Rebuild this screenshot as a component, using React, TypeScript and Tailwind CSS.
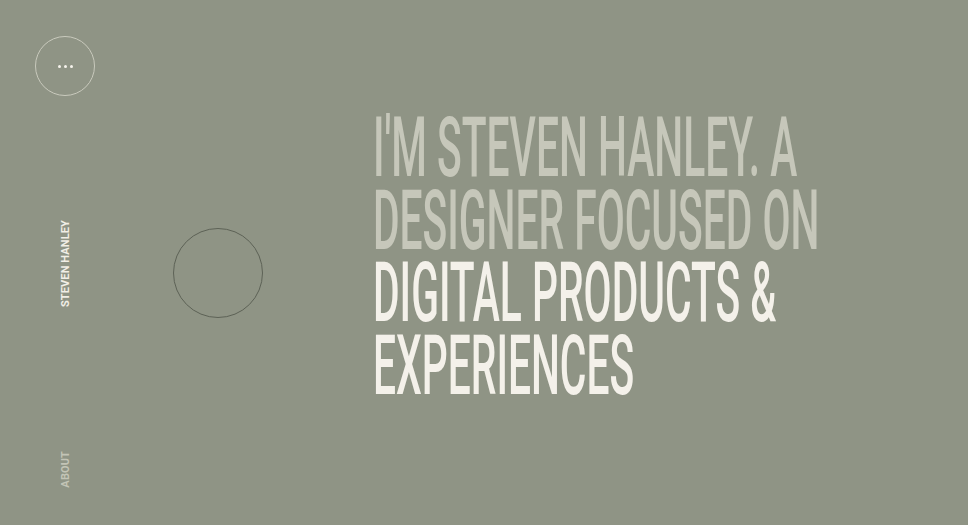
import React from "react";

const lines = [
  { t: "I'M STEVEN HANLEY. A", c: "text-[#c6c7ba]" },
  { t: "DESIGNER FOCUSED ON", c: "text-[#c6c7ba]" },
  { t: "DIGITAL PRODUCTS &", c: "text-[#f4f1ea]" },
  { t: "EXPERIENCES", c: "text-[#f4f1ea]" },
];

export default function App() {
  return (
    <div className="w-full h-[525px] bg-[#8f9485] flex overflow-hidden" style={{ fontFamily: "Roboto, 'Liberation Sans', sans-serif" }}>
      <aside className="w-[130px] h-full flex flex-col items-center pt-[36px] pb-[37px] shrink-0">
        <button className="w-[60px] h-[60px] rounded-full border border-[#c9cabd] flex items-center justify-center gap-[3px]">
          <span className="w-[3px] h-[3px] rounded-full bg-[#f6f3ec]" />
          <span className="w-[3px] h-[3px] rounded-full bg-[#f6f3ec]" />
          <span className="w-[3px] h-[3px] rounded-full bg-[#f6f3ec]" />
        </button>
        <div className="mt-[124px] [writing-mode:vertical-rl] rotate-180 text-[11px] font-bold tracking-[0.01em] text-[#f1eee6] leading-none">
          STEVEN HANLEY
        </div>
        <div className="flex-1" />
        <div className="[writing-mode:vertical-rl] rotate-180 text-[11px] font-bold tracking-[0.01em] text-[#c3c4b6] leading-none">
          ABOUT
        </div>
      </aside>
      <main className="flex-1 flex items-start">
        <div className="mt-[228px] ml-[43px] w-[90px] h-[90px] rounded-full border-[1.5px] border-[#5d6256] shrink-0" />
        <h1 className="ml-[110px] mt-[112px] text-[84px] font-medium leading-[72.5px] whitespace-nowrap">
          {lines.map((l) => (
            <div key={l.t} className={`${l.c} h-[72.5px]`}>
              <span className="inline-block origin-left scale-x-[0.485]">{l.t}</span>
            </div>
          ))}
        </h1>
      </main>
    </div>
  );
}
